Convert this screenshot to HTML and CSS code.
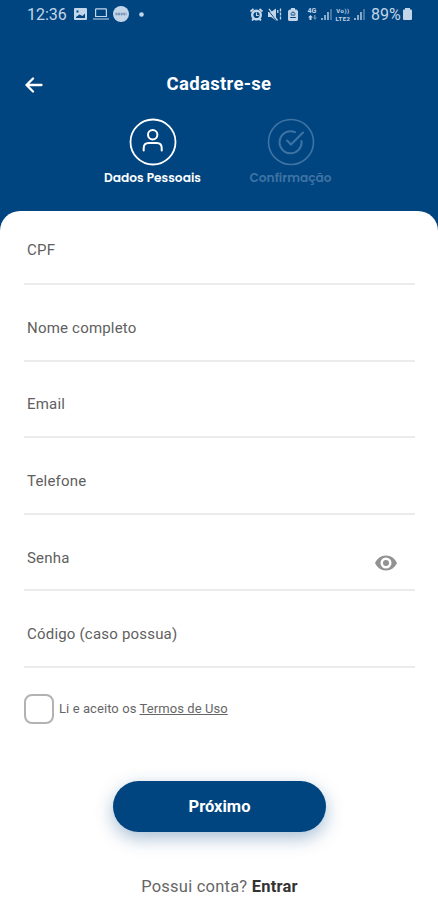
FILE: index.html
```html
<!DOCTYPE html>
<html lang="pt-BR">
<head>
    <meta charset="UTF-8">
    <meta name="viewport" content="width=device-width, initial-scale=1.0">
    <title>Cadastre-se</title>
    <link rel="stylesheet" href="styles.css">
</head>
<body>
    <div class="status-bar">
        <span class="clock">12:36</span>
        <svg class="picture" width="13" height="12" viewBox="0 0 13 12">
            <path fill="currentColor" fill-rule="evenodd" d="M1 0h11a1 1 0 0 1 1 1v10a1 1 0 0 1-1 1H1a1 1 0 0 1-1-1V1a1 1 0 0 1 1-1zM2 10h9V5.500L8.500 8 5.500 6.500 2 9zM2.500 2.500v2h2v-2z"/>
        </svg>
        <svg class="laptop" width="16" height="12" viewBox="0 0 16 12">
            <path fill="none" stroke="currentColor" stroke-width="1.200" d="M2.600 8.500v-7q0-.7.7-.7h9.400q.7 0 .7.700v7zM0 11h16"/>
        </svg>
        <svg class="app" width="16" height="16" viewBox="0 0 16 16">
            <circle cx="8" cy="8" r="8" fill="currentColor"/>
            <path stroke="#7893b4" stroke-width="2.500" stroke-dasharray="2 .6" d="M2.500 8h11"/>
        </svg>
        <svg class="dot" width="5" height="5" viewBox="0 0 5 5"><circle cx="2.500" cy="2.500" r="2.300" fill="currentColor"/></svg>

        <svg class="alarm" width="13" height="13" viewBox="0 0 13 13">
            <circle cx="6.500" cy="7" r="4.300" fill="none" stroke="currentColor" stroke-width="2.400"/>
            <path fill="none" stroke="currentColor" stroke-width="1.800" d="M.5 3.500 3.500.8M12.500 3.500 9.500.8M2 12.500l2-2M11 12.500l-2-2"/>
            <path fill="none" stroke="currentColor" stroke-width="1.100" d="M6.500 4.500v3h2.200"/>
        </svg>
        <svg class="mute" width="14" height="13" viewBox="0 0 14 13">
            <path fill="currentColor" d="M0 4h3l5-3.500v12L3 9H0z"/>
            <path fill="none" stroke="#004580" stroke-width="1" d="M0 2l8 10"/>
            <path fill="none" stroke="currentColor" stroke-width="1.300" d="M1 .8l8.500 11.700"/>
            <path fill="none" stroke="currentColor" stroke-width="1.300" d="M9.800 2v4M12.500.5v12" stroke-dasharray="3 1"/>
        </svg>
        <svg class="saver" width="10" height="13" viewBox="0 0 10 13">
            <path fill="currentColor" d="M3 0h4v1.500h1.500L10 3v9l-1 1H1l-1-1V3l1.500-1.500H3z"/>
            <path fill="none" stroke="#004580" d="M2.500 6 5 3.800 7.500 6M2.200 9.500h5.600M3 7h4"/>
        </svg>
        <span class="network">4G<svg width="9" height="5" viewBox="0 0 9 5"><path fill="currentColor" d="M2.500 0 5 2.500H3.500V5h-2V2.500H0z"/><path fill="currentColor" opacity=".5" d="M6 0h1.500v2.500H9L7 5 5 2.500h1z"/></svg></span>
        <svg class="signal" width="11" height="12" viewBox="0 0 11 12">
            <path stroke="currentColor" stroke-width="1.400" d="M1 10v2M4 7v5M7 4v8"/>
            <path stroke="currentColor" stroke-width="1.400" opacity=".5" d="M10 1v11"/>
        </svg>
        <span class="volte"><span>Vo))</span><span>LTE2</span></span>
        <svg class="signal" width="11" height="12" viewBox="0 0 11 12">
            <path stroke="currentColor" stroke-width="1.400" d="M1 10v2M4 7v5M7 4v8"/>
            <path stroke="currentColor" stroke-width="1.400" opacity=".5" d="M10 1v11"/>
        </svg>
        <span class="percent">89%</span>
        <svg class="battery" width="9" height="12" viewBox="0 0 9 12">
            <path fill="currentColor" d="M2 0h5v1.500h1q1 0 1 1V11q0 1-1 1H1q-1 0-1-1V2.500q0-1 1-1h1z"/>
        </svg>
    </div>

    <header>
        <a class="back" href="#" aria-label="Voltar">
            <svg width="18" height="16" viewBox="0 0 18 16">
                <path fill="none" stroke="currentColor" stroke-width="2.300" stroke-linecap="round" stroke-linejoin="round" d="M16.500 8H1.500M8 1.500 1.500 8 8 14.500"/>
            </svg>
        </a>
        <h1>Cadastre-se</h1>
    </header>

    <div class="steps">
        <div class="step">
            <svg width="48" height="48" viewBox="0 0 48 48" fill="none" stroke="currentColor">
                <circle cx="24" cy="24" r="22.500" stroke-width="1.800"/>
                <circle cx="23.700" cy="16.800" r="4.700" stroke-width="2"/>
                <path stroke-width="2" stroke-linecap="round" d="M14.700 32.500V30q0-5 5-5h8q5 0 5 5v2.500"/>
            </svg>
            <span>Dados Pessoais</span>
        </div>
        <div class="step inactive">
            <svg width="48" height="48" viewBox="0 0 48 48" fill="none" stroke="currentColor">
                <circle cx="24" cy="24" r="22.500" stroke-width="1.600"/>
                <path stroke-width="2" stroke-linecap="round" d="M28 14.200A11 11 0 1 0 34.500 23M20 22.500l4 4L36 14.500"/>
            </svg>
            <span>Confirmação</span>
        </div>
    </div>

    <main>
        <form id="register-form">
            <label class="field"><span>CPF</span><input type="text" name="cpf"></label>
            <label class="field"><span>Nome completo</span><input type="text" name="nome"></label>
            <label class="field"><span>Email</span><input type="email" name="email"></label>
            <label class="field"><span>Telefone</span><input type="tel" name="telefone"></label>
            <label class="field">
                <span>Senha</span><input type="password" name="senha">
                <svg class="eye" width="22" height="16" viewBox="0 0 22 16">
                    <path fill="currentColor" fill-rule="evenodd" d="M11 .5C6 .5 2 3.500 0 8c2 4.500 6 7.500 11 7.500S20 12.500 22 8C20 3.500 16 .5 11 .5zM11 2.500a5.500 5.500 0 1 1 0 11a5.500 5.500 0 1 1 0-11z"/>
                    <circle cx="11" cy="8" r="3" fill="currentColor"/>
                </svg>
            </label>
            <label class="field"><span>Código (caso possua)</span><input type="text" name="codigo"></label>

            <div class="terms">
                <input type="checkbox" id="terms">
                <label for="terms">Li e aceito os <a href="#">Termos de Uso</a></label>
            </div>

            <button type="submit">Próximo</button>
        </form>
        <p class="login">Possui conta? <a href="#">Entrar</a></p>
    </main>
</body>
</html>
```
FILE: styles.css
```css
* {
    box-sizing: border-box;
}

body {
    font-family: Roboto, sans-serif;
    background-color: #004580;
    margin: 0;
    height: 900px;
    display: flex;
    flex-direction: column;
    overflow: hidden;
}

.status-bar {
    display: flex;
    align-items: center;
    height: 28px;
    padding: 0 26px 0 27px;
    color: #c3d5e8;
    flex-shrink: 0;
}

.status-bar svg {
    flex-shrink: 0;
}

.clock {
    font-size: 16px;
    width: 47px;
}

.laptop {
    margin-left: 6px;
}

.app {
    margin-left: 4px;
}

.dot {
    margin-left: 10px;
}

.alarm {
    margin-left: auto;
}

.mute {
    margin-left: 5px;
}

.saver {
    margin-left: 6px;
}

.network {
    display: flex;
    flex-direction: column;
    align-items: center;
    width: 10px;
    margin-left: 9px;
    font-size: 7px;
    line-height: 7px;
    font-weight: bold;
}

.signal {
    margin-left: 4px;
}

.volte {
    display: flex;
    flex-direction: column;
    align-items: center;
    gap: 1px;
    width: 18px;
    margin-left: 2px;
    font-size: 6px;
    line-height: 7px;
    letter-spacing: 0.5px;
    font-weight: bold;
}

.volte + .signal {
    margin-left: 2px;
}

.percent {
    width: 31px;
    margin-left: 6px;
    font-size: 16px;
}

.battery {
    margin-left: 1px;
}

header {
    display: grid;
    grid-template-columns: 25px 1fr 25px;
    align-items: center;
    height: 30px;
    margin-top: 41px;
    padding: 0 25px;
    flex-shrink: 0;
}

.back {
    color: white;
    height: 14px;
}

h1 {
    margin: 0;
    color: white;
    font-size: 18.5px;
    line-height: 30px;
    letter-spacing: 0.3px;
    text-align: center;
}

.steps {
    display: flex;
    justify-content: center;
    height: 111.5px;
    padding-top: 19px;
    padding-left: 5px;
    flex-shrink: 0;
}

.step {
    display: flex;
    flex-direction: column;
    align-items: center;
    width: 138px;
    color: white;
    font-family: Poppins, Inter, sans-serif;
    font-size: 12.2px;
    line-height: 18px;
    font-weight: 600;
    white-space: nowrap;
}

.step span {
    margin-top: 3px;
}

.inactive {
    color: #3e73a4;
}

main {
    flex: 1;
    background-color: white;
    border-radius: 20px 20px 0 0;
    padding: 0 23px 0 24px;
}

.field {
    display: flex;
    align-items: center;
    height: 76.6px;
    border-bottom: 2px solid #ebebeb;
    color: #606060;
    font-size: 15px;
    letter-spacing: 0.2px;
    padding: 11px 18px 0 3px;
}

.field:first-child {
    height: 74.5px;
    padding-top: 7px;
}

.field input {
    flex: 1;
    min-width: 0;
    border: none;
    outline: none;
    background: none;
    font: inherit;
}

.eye {
    color: #929292;
    margin-top: 11px;
}

.terms {
    display: flex;
    align-items: center;
    margin-top: 26px;
    color: #666;
    font-size: 13px;
    letter-spacing: 0.08px;
}

.terms input {
    appearance: none;
    width: 30px;
    height: 30px;
    margin: 0 5px 0 0;
    border: 2.5px solid #b2b2b2;
    border-radius: 8px;
}

.terms a {
    color: inherit;
}

form button {
    display: block;
    width: 213px;
    height: 51px;
    margin: 57px auto 0;
    background-color: #004580;
    color: white;
    font-family: inherit;
    font-size: 16.5px;
    font-weight: bold;
    border: none;
    border-radius: 26px;
    box-shadow: 0 6px 18px rgba(0, 69, 128, 0.35);
    cursor: pointer;
}

.login {
    margin: 45px 0 0;
    color: #666;
    font-size: 16.5px;
    letter-spacing: 0.22px;
    line-height: 20px;
    text-align: center;
}

.login a {
    color: #333;
    font-weight: bold;
    text-decoration: none;
}
```
